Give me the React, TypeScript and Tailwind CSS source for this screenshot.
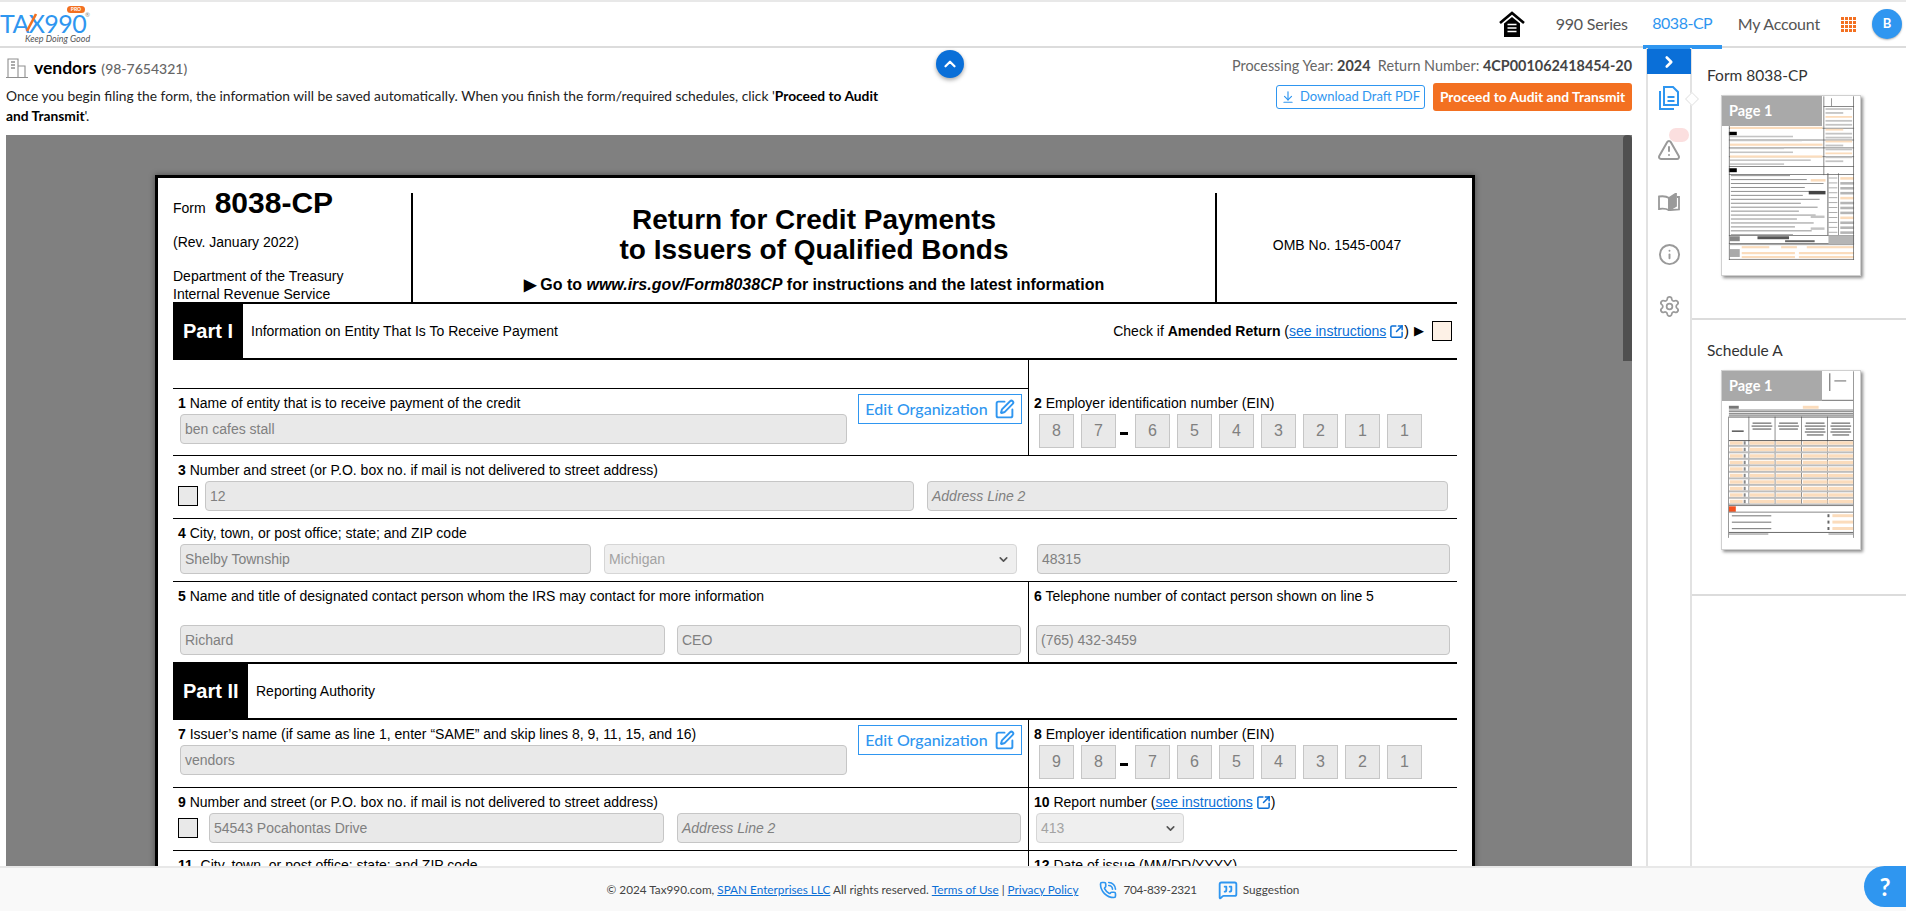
import React from "react";
import {
  ArrowDownToLine,
  ChevronDown,
  ChevronRight,
  ChevronUp,
  Info,
  MessageSquareQuote,
  PhoneCall,
  Settings,
  SquareArrowOutUpRight,
  SquarePen,
  TriangleAlert,
} from "lucide-react";

const fieldClass =
  "h-[30px] rounded-[4px] border-[1.5px] border-[#c6c6c6] bg-[#e9e9e9] px-[4px] text-[14px] leading-[28px] text-[#808080]";

function Field({ value, className = "", italic = false }: { value: string; className?: string; italic?: boolean }) {
  return <div className={`${fieldClass} ${italic ? "italic text-[#8c8c8c]" : ""} ${className}`}>{value}</div>;
}

function SelectField({ value, className = "" }: { value: string; className?: string }) {
  return (
    <div className={`flex h-[30px] items-center justify-between rounded-[4px] border-[1.5px] border-[#d6d6d6] bg-[#efefef] pl-[4px] pr-[6px] text-[14px] text-[#a3a3a3] ${className}`}>
      <span>{value}</span>
      <ChevronDown size={13} strokeWidth={3} className="text-[#555]" />
    </div>
  );
}

function Label({ num, children, className = "" }: { num: string; children: React.ReactNode; className?: string }) {
  return (
    <div className={`h-[25px] whitespace-nowrap pt-[6px] text-[14px] leading-[16px] text-black ${className}`}>
      <b>{num}</b> {children}
    </div>
  );
}

function SeeInstructions() {
  return (
    <a className="inline-flex items-center gap-[3px] text-[#0b6fd6] underline">
      see instructions
      <SquareArrowOutUpRight size={15} strokeWidth={2.4} />
    </a>
  );
}

function EditOrganization() {
  return (
    <button className="mt-[5px] flex h-[30px] w-[164px] items-center justify-center gap-[6px] border border-[#2f96f0] font-['Lato',sans-serif] text-[16px] font-medium text-[#2f96f0]">
      Edit Organization
      <SquarePen size={21} strokeWidth={2.2} />
    </button>
  );
}

function EinBoxes({ digits }: { digits: string[] }) {
  return (
    <div className="ml-[5px] flex gap-[7px]">
      {digits.map((d, i) => (
        <React.Fragment key={i}>
          <div className="flex h-[34px] w-[35px] items-center justify-center border-[1.5px] border-[#c6c6c6] bg-[#e9e9e9] text-[16px] text-[#808080]">
            {d}
          </div>
          {i === 1 && <div className="-ml-[3px] mt-[18px] h-[3px] w-[8px] bg-black" />}
        </React.Fragment>
      ))}
    </div>
  );
}

function PartHeader({ part, title, wide, children }: { part: string; title: string; wide?: boolean; children?: React.ReactNode }) {
  return (
    <div className="flex h-[58px] items-stretch border-y-2 border-black">
      <div className={`-my-[2px] flex items-center bg-black pl-[10px] text-[20px] font-bold text-white ${wide ? "w-[75px]" : "w-[70px]"}`}>
        {part}
      </div>
      <div className="ml-[8px] flex items-center text-[14px] text-black">{title}</div>
      {children}
    </div>
  );
}

function Row({ left, right, height }: { left: React.ReactNode; right: React.ReactNode; height: string }) {
  return (
    <div className={`flex border-b border-black ${height}`}>
      <div className="w-[855px] pl-[5px]">{left}</div>
      <div className="flex-1 border-l border-black pl-[5px]">{right}</div>
    </div>
  );
}

function TaxForm() {
  return (
    <div className="ml-[149px] mt-[40px] w-[1320px] border-[3px] border-black bg-white px-[15px] pb-[40px] pt-[15px] font-['Liberation_Sans',sans-serif] shadow-[0_0_6px_rgba(0,0,0,0.4)]">
      {/* title block */}
      <div className="flex h-[109px] text-black">
        <div className="w-[240px] border-r-2 border-black">
          <div className="-mt-[2px] flex items-baseline gap-[9px] text-[14px]">
            Form <span className="text-[30px] font-bold leading-[24px]">8038-CP</span>
          </div>
          <div className="mt-[14px] text-[14px] leading-[18px]">(Rev. January 2022)</div>
          <div className="mt-[16px] text-[14px] leading-[18px]">
            Department of the Treasury
            <br />
            Internal Revenue Service
          </div>
        </div>
        <div className="flex-1 pt-[12px] text-center font-bold">
          <div className="text-[28px] leading-[30px]">
            Return for Credit Payments
            <br />
            to Issuers of Qualified Bonds
          </div>
          <div className="mt-[10px] text-[16px] leading-[19px]">
            ▶ Go to <i>www.irs.gov/Form8038CP</i> for instructions and the latest information
          </div>
        </div>
        <div className="flex w-[242px] items-center justify-center border-l-2 border-black pb-[4px] text-[14px]">OMB No. 1545-0047</div>
      </div>

      <PartHeader part="Part I" title="Information on Entity That Is To Receive Payment">
        <div className="ml-auto flex items-center pr-[5px] text-[14px] text-black">
          Check if&nbsp;<b>Amended Return</b>&nbsp;(<SeeInstructions />) <span className="ml-[5px] text-[13px]">▶</span>
          <div className="ml-[8px] h-[20px] w-[20px] border border-black bg-[#fdf1e6]" />
        </div>
      </PartHeader>

      <Row
        height="h-[96px]"
        left={
          <div>
            <div className="-ml-[5px] h-[29px] border-b border-black" />
            <div className="flex">
              <div className="w-[669px]">
                <Label num="1">Name of entity that is to receive payment of the credit</Label>
                <Field value="ben cafes stall" className="ml-[2px]" />
              </div>
              <div className="ml-[11px]">
                <EditOrganization />
              </div>
            </div>
          </div>
        }
        right={
          <div className="pt-[29px]">
            <Label num="2">Employer identification number (EIN)</Label>
            <EinBoxes digits={["8", "7", "6", "5", "4", "3", "2", "1", "1"]} />
          </div>
        }
      />

      <div className="h-[63px] border-b border-black pl-[5px]">
        <Label num="3">Number and street (or P.O. box no. if mail is not delivered to street address)</Label>
        <div className="flex items-center">
          <div className="h-[20px] w-[20px] border border-black bg-[#e9e9e9]" />
          <Field value="12" className="ml-[7px] w-[709px]" />
          <Field value="Address Line 2" italic className="ml-[13px] w-[521px]" />
        </div>
      </div>

      <div className="h-[63px] border-b border-black pl-[5px]">
        <Label num="4">City, town, or post office; state; and ZIP code</Label>
        <div className="ml-[2px] flex">
          <Field value="Shelby Township" className="w-[411px]" />
          <SelectField value="Michigan" className="ml-[13px] w-[413px]" />
          <Field value="48315" className="ml-[20px] w-[413px]" />
        </div>
      </div>

      <div className="flex h-[80px]">
        <div className="w-[855px] pl-[5px]">
          <Label num="5" className="h-[43px]">Name and title of designated contact person whom the IRS may contact for more information</Label>
          <div className="ml-[2px] flex">
            <Field value="Richard" className="w-[485px]" />
            <Field value="CEO" className="ml-[12px] w-[344px]" />
          </div>
        </div>
        <div className="flex-1 border-l border-black pl-[5px]">
          <Label num="6" className="h-[43px]">Telephone number of contact person shown on line 5</Label>
          <Field value="(765) 432-3459" className="ml-[2px] w-[414px]" />
        </div>
      </div>

      <PartHeader part="Part II" title="Reporting Authority" wide />

      <Row
        height="h-[68px]"
        left={
          <div className="flex">
            <div className="w-[669px]">
              <Label num="7">Issuer’s name (if same as line 1, enter “SAME” and skip lines 8, 9, 11, 15, and 16)</Label>
              <Field value="vendors" className="ml-[2px]" />
            </div>
            <div className="ml-[11px]">
              <EditOrganization />
            </div>
          </div>
        }
        right={
          <div>
            <Label num="8">Employer identification number (EIN)</Label>
            <EinBoxes digits={["9", "8", "7", "6", "5", "4", "3", "2", "1"]} />
          </div>
        }
      />

      <Row
        height="h-[63px]"
        left={
          <div>
            <Label num="9">Number and street (or P.O. box no. if mail is not delivered to street address)</Label>
            <div className="flex items-center">
              <div className="h-[20px] w-[20px] border border-black bg-[#e9e9e9]" />
              <Field value="54543 Pocahontas Drive" className="ml-[11px] w-[455px]" />
              <Field value="Address Line 2" italic className="ml-[13px] w-[344px]" />
            </div>
          </div>
        }
        right={
          <div>
            <Label num="10">
              Report number (<SeeInstructions />)
            </Label>
            <SelectField value="413" className="ml-[2px] w-[148px]" />
          </div>
        }
      />

      <Row
        height="h-[63px]"
        left={<Label num="11">&nbsp;City, town, or post office; state; and ZIP code</Label>}
        right={<Label num="12">Date of issue (MM/DD/YYYY)</Label>}
      />
    </div>
  );
}

function FormThumb() {
  const peach = "#fbdcbc";
  const grey = "#c4c4c4";
  const dark = "#555";
  const textRows = [80, 84, 88, 92, 96, 100, 104, 108, 112, 116, 120, 124, 128, 132, 136, 140];
  const rightRows = [82, 87, 92, 97, 102, 107, 112, 117, 122, 127, 132, 137];
  const topRows = [12, 16, 20, 24, 28, 33, 37, 41, 45, 49, 53, 57, 61, 65];
  const leftRows = [31, 40, 44, 48, 52, 56, 60, 64, 68];
  return (
    <svg viewBox="0 0 140 181" className="h-full w-full blur-[0.3px]">
      {[[7, 32, 127], [7, 44, 127], [7, 52, 127], [7, 61, 127], [7, 71, 127], [7, 79, 127], [7, 141, 127], [7, 149, 127], [7, 165, 127]].map(([x, y, w], i) => (
        <rect key={i} x={x} y={y} width={w} height={0.7} fill={dark} />
      ))}
      <rect x={7} y={36} width={8} height={3.5} fill="#000" />
      <rect x={7} y={73} width={8} height={4} fill="#000" />
      {leftRows.map((y, i) => (
        <rect key={y} x={8} y={y} width={i % 3 === 0 ? 94 : 55 + (i * 9) % 36} height={i % 3 === 0 ? 2.2 : 1.6} fill={i % 3 === 0 ? peach : grey} />
      ))}
      <rect x={103} y={0} width={0.7} height={80} fill={dark} />
      {topRows.map((y, i) => (
        <rect key={y} x={105} y={y} width={i % 4 === 1 ? 18 : 27} height={1.8} fill={i % 3 === 2 ? peach : grey} />
      ))}
      {textRows.map((y, i) => (
        <rect key={y} x={9} y={y} width={60 + ((i * 17) % 36)} height={1} fill="#8f8f8f" />
      ))}
      <rect x={107} y={78} width={0.9} height={63} fill={dark} />
      <rect x={118} y={78} width={0.6} height={63} fill={dark} />
      {rightRows.map((y, i) => (
        <g key={y}>
          <rect x={120} y={y} width={14} height={2.6} fill={i % 4 === 0 ? peach : "#b5b5b5"} />
          <rect x={108} y={y + 0.5} width={9} height={0.8} fill="#999" />
        </g>
      ))}
      <rect x={90} y={84} width={15} height={2.5} fill={peach} />
      <rect x={88} y={96} width={17} height={3.5} fill="#444" />
      <rect x={90} y={121} width={14} height={2.5} fill={grey} />
      <rect x={90} y={133} width={14} height={2.5} fill={grey} />
      <rect x={108} y={141} width={26} height={9} fill="#b5b5b5" />
      <rect x={36} y={142} width={32} height={3} fill="#555" />
      <rect x={64} y={146} width={30} height={2} fill="#666" />
      <rect x={8} y={142} width={10} height={5} fill="#888" />
      <rect x={8} y={150} width={126} height={1} fill="#999" />
      <rect x={20} y={152} width={28} height={2.2} fill={peach} />
      <rect x={60} y={152} width={16} height={2.2} fill={peach} />
      <rect x={86} y={152} width={48} height={2.2} fill={peach} />
      <rect x={20} y={158} width={54} height={2.2} fill={peach} />
      <rect x={78} y={158} width={56} height={2.2} fill={peach} />
      <rect x={20} y={162} width={54} height={2.2} fill={peach} />
      <rect x={78} y={162} width={56} height={2.2} fill={peach} />
      <rect x={8} y={155} width={10} height={8} fill="#aaa" />
      <rect x={7} y={30} width={0.7} height={136} fill={dark} />
      <rect x={133} y={0} width={0.7} height={166} fill={dark} />
      <rect x={111} y={2} width={0.6} height={8} fill={dark} />
      <rect x={103} y={10} width={31} height={0.7} fill={dark} />
    </svg>
  );
}

function ScheduleThumb() {
  const columns = [[8, 13], [28, 25], [55, 25], [82, 25], [108, 25]];
  const rows = [71, 77.6, 84.2, 90.8, 97.4, 104, 110.6, 117.2, 123.8, 130.4];
  return (
    <svg viewBox="0 0 140 180" className="h-full w-full blur-[0.3px]">
      <rect x={109} y={2} width={0.8} height={18} fill="#333" />
      <rect x={114} y={9} width={12} height={1.5} fill="#999" />
      <rect x={7} y={29} width={126} height={0.7} fill="#333" />
      <rect x={7} y={35} width={10} height={3} fill="#777" />
      <rect x={82} y={35} width={16} height={3} fill="#fbdcbc" />
      <rect x={7} y={39} width={126} height={0.6} fill="#333" />
      {[40.5, 42.5, 44].map((y) => (
        <rect key={y} x={7} y={y} width={126} height={1} fill="#777" />
      ))}
      <rect x={7} y={46} width={126} height={0.8} fill="#333" />
      <rect x={7} y={70} width={126} height={0.8} fill="#333" />
      {[27, 53.5, 80.5, 106.5].map((x) => (
        <rect key={x} x={x} y={46} width={0.6} height={89} fill="#444" />
      ))}
      {columns.slice(1).map(([x, w], i) => (
        <g key={x}>
          <rect x={x + 3} y={52} width={w - 6} height={1.2} fill="#666" />
          <rect x={x + 2} y={55} width={w - 4} height={1.2} fill="#666" />
          <rect x={x + 3} y={58} width={w - 6} height={1.2} fill="#666" />
          {i > 1 && <rect x={x + 2} y={61} width={w - 4} height={1.2} fill="#666" />}
          {i > 1 && <rect x={x + 4} y={64} width={w - 8} height={1.2} fill="#666" />}
        </g>
      ))}
      <rect x={10} y={60} width={12} height={1.5} fill="#555" />
      {rows.map((y) => (
        <g key={y}>
          <rect x={7} y={y + 3.6} width={126} height={2} fill="#bdbdbd" />
          {columns.map(([x, w]) => (
            <rect key={x} x={x} y={y} width={w} height={3.4} fill="#fbdcbc" />
          ))}
          <rect x={22} y={y} width={2} height={3.4} fill="#888" />
        </g>
      ))}
      <rect x={7} y={137} width={7} height={5.5} fill="#f4511e" />
      <rect x={7} y={136} width={126} height={0.7} fill="#555" />
      <rect x={7} y={142.5} width={126} height={0.7} fill="#555" />
      {[146, 152.5, 159].map((y) => (
        <g key={y}>
          <rect x={10} y={y} width={40} height={1.2} fill="#888" />
          <rect x={112} y={y - 1} width={21} height={3} fill="#fbdcbc" />
          <rect x={107} y={y - 1} width={2} height={3} fill="#666" />
        </g>
      ))}
      <rect x={7} y={163} width={126} height={0.8} fill="#444" />
      <rect x={7} y={164.5} width={40} height={1.2} fill="#999" />
      <rect x={108} y={164.5} width={25} height={1.2} fill="#999" />
      <rect x={6.5} y={46} width={0.6} height={123} fill="#555" />
      <rect x={133} y={0} width={0.6} height={169} fill="#555" />
    </svg>
  );
}

function Thumbnail({ children, height }: { children: React.ReactNode; height: string }) {
  return (
    <div className={`relative ml-[14px] w-[140px] border border-[#d0d0d0] bg-white shadow-[2px_2px_3px_rgba(0,0,0,0.45)] ${height}`}>
      {children}
      <div className="absolute left-0 top-0 flex h-[30px] w-[100px] items-center bg-[#a9a9a9] pl-[7px] text-[14.5px] font-bold text-white">Page 1</div>
    </div>
  );
}

function HomeIcon() {
  return (
    <svg viewBox="0 0 26 26" className="h-[26px] w-[26px]">
      <path d="M1 12 L13 2 L25 12" fill="none" stroke="#000" strokeWidth="2.6" />
      <path d="M5 12.5 L13 6 L21 12.5 V26 H5 Z" fill="#000" />
      <path d="M8.5 13.5h9M8.5 17h9M8.5 20.5h9" stroke="#fff" strokeWidth="1.4" />
    </svg>
  );
}

function DocIcon() {
  return (
    <svg viewBox="0 0 20 24" className="h-[24px] w-[20px]" fill="none" stroke="#2f96f0" strokeWidth="2">
      <path d="M5 1h9l5 5v13H5z" />
      <path d="M1 5v18h14" />
      <path d="M8.5 11h7M8.5 15h7" strokeWidth="1.8" />
    </svg>
  );
}

function BookIcon() {
  return (
    <svg viewBox="0 0 22 18" className="h-[18px] w-[22px]" fill="none" stroke="#9a9a9a" strokeWidth="1.8">
      <path d="M11 5C9 3.500 5 3 1 3.500V16c4-.6 8 0 10 1.200z" />
      <path d="M11 5l7-4.500V13l-7 4.200z" fill="#9a9a9a" />
      <path d="M19 4h2v12.500l-10 .700" />
    </svg>
  );
}

function BuildingIcon() {
  return (
    <svg viewBox="0 0 22 20" className="h-[20px] w-[22px]" fill="none" stroke="#8f8f8f" strokeWidth="1.100">
      <path d="M2 19V1h10v18M12 8h7v11M0 19.500h22" />
      <path d="M5 4h4M5 7h4M5 10h4" strokeWidth="1.500" />
    </svg>
  );
}

function Logo() {
  return (
    <div className="relative h-[44px] w-[96px] shrink-0 font-['Lato',sans-serif]">
      <div className="absolute left-0 top-[11px] text-[25px] leading-[20px] tracking-[-0.6px] text-[#2f96f0]">TAX990</div>
      <svg viewBox="0 0 20 20" className="absolute left-[24px] top-[10px] h-[20px] w-[20px]">
        <path d="M3 19 L12 2" stroke="#f37021" strokeWidth="2.6" fill="none" />
      </svg>
      <div className="absolute left-[67px] top-[4px] flex h-[7px] w-[18px] items-center justify-center rounded-full bg-[#f37021] text-[5px] font-bold text-white">PRO</div>
      <div className="absolute left-[85px] top-[9px] text-[6px] leading-[8px] text-[#888]">®</div>
      <div className="absolute left-[25px] top-[32px] whitespace-nowrap text-[9px] italic leading-[9px] text-[#555]">Keep Doing Good</div>
    </div>
  );
}

export default function App() {
  return (
    <div className="relative flex h-screen w-full flex-col overflow-hidden bg-white font-['Lato',sans-serif] text-[#333]">
      <header className="flex h-[48px] shrink-0 items-start border-b-2 border-t-2 border-b-[#dcdcdc] border-t-[#e8e8e8]">
        <Logo />
        <nav className="ml-auto flex h-full items-center text-[16px] text-[#555]">
          <HomeIcon />
          <a className="ml-[31px] tracking-[-0.2px]">990 Series</a>
          <a className="relative ml-[15px] flex h-[47px] w-[79px] items-center justify-center self-start border-b-4 border-[#2f96f0] pb-[1px] tracking-[-0.5px] text-[#2f96f0]">8038-CP</a>
          <a className="ml-[16px] tracking-[-0.2px]">My Account</a>
          <div className="ml-[21px] grid grid-cols-4 gap-[1px]">
            {Array.from({ length: 16 }).map((_, i) => (
              <span key={i} className="h-[3px] w-[3px] bg-[#f37021]" />
            ))}
          </div>
          <div className="ml-[16px] mr-[4px] flex h-[30px] w-[30px] items-center justify-center rounded-full bg-[#2f96f0] text-[13px] font-bold text-white shadow-[0_1px_2px_rgba(0,0,0,0.3)]">B</div>
        </nav>
      </header>

      <div className="flex min-h-0 flex-1">
        <main className="relative flex w-[1646px] shrink-0 flex-col pr-[14px]">
          <div className="flex h-[87px] shrink-0 justify-between pl-[6px]">
            <div className="w-[880px] pt-[9px]">
              <div className="flex h-[22px] items-center">
                <BuildingIcon />
                <span className="ml-[6px] text-[17.5px] font-bold text-black">vendors</span>
                <span className="ml-[5px] text-[14px] font-medium text-[#666]">(98-7654321)</span>
              </div>
              <p className="mt-[7px] text-[13.8px] leading-[20px] text-[#222]">
                Once you begin filing the form, the information will be saved automatically. When you finish the form/required schedules, click '<b className="text-black">Proceed to Audit and Transmit</b>'.
              </p>
            </div>
            <div className="flex flex-col items-end pt-[10px]">
              <div className="h-[16px] text-[14.4px] leading-[16px] text-[#666]">
                Processing Year: <b className="text-[#444]">2024</b>&nbsp;&nbsp;Return Number: <b className="text-[#444]">4CP001062418454-20</b>
              </div>
              <div className="mt-[9px] flex items-center gap-[8px]">
                <button className="flex h-[24px] w-[149px] items-center justify-center gap-[5px] rounded-[3px] border border-[#2f96f0] text-[13px] text-[#2f96f0]">
                  <ArrowDownToLine size={14} />
                  Download Draft PDF
                </button>
                <button className="h-[28px] w-[199px] rounded-[3px] bg-[#f37021] text-[13.8px] font-bold text-white">Proceed to Audit and Transmit</button>
              </div>
            </div>
          </div>
          <button className="absolute left-[936px] top-[2px] flex h-[28px] w-[28px] items-center justify-center rounded-full bg-[#0a6fd8] text-white shadow-[0_2px_4px_rgba(0,0,0,0.35)]">
            <ChevronUp size={18} strokeWidth={3} />
          </button>
          <div className="relative ml-[6px] min-h-0 flex-1 overflow-hidden bg-[#808080]">
            <TaxForm />
            <div className="absolute right-0 top-0 h-[226px] w-[9px] rounded-t-[4px] bg-[#505050]" />
          </div>
        </main>

        <aside className="relative w-[46px] shrink-0 border-x-2 border-[#e2e2e2]">
          <div className="-mx-[1px] mt-[1px] flex h-[25px] items-center justify-center bg-[#0a6fd8] text-white">
            <ChevronRight size={18} strokeWidth={3.5} />
          </div>
          <div className="-mt-[2px] flex flex-col items-center">
            <div className="flex h-[52px] items-center"><DocIcon /></div>
            <div className="flex h-[52px] items-center"><TriangleAlert size={24} strokeWidth={2} className="text-[#9a9a9a]" /></div>
            <div className="flex h-[52px] items-center"><BookIcon /></div>
            <div className="flex h-[52px] items-center"><Info size={23} strokeWidth={2} className="text-[#9a9a9a]" /></div>
            <div className="flex h-[52px] items-center"><Settings size={23} strokeWidth={1.800} className="text-[#9a9a9a]" /></div>
          </div>
          <div className="absolute left-[21px] top-[80px] h-[14px] w-[20px] rounded-full bg-[#fbdfdf]" />
          <div className="absolute -right-[7px] top-[46px] z-10 h-[10px] w-[10px] rotate-45 border border-[#e6e6e6] bg-white" />
        </aside>

        <section className="flex-1">
          <div className="h-[272px] border-b-2 border-[#dcdcdc] pl-[15px] pt-[18px]">
            <h3 className="h-[29px] text-[15.500px] leading-[18px] text-[#333]">Form 8038-CP</h3>
            <Thumbnail height="h-[181px]"><FormThumb /></Thumbnail>
          </div>
          <div className="h-[276px] border-b-2 border-[#dcdcdc] pl-[15px] pt-[21px]">
            <h3 className="h-[29px] text-[15.500px] leading-[18px] text-[#333]">Schedule A</h3>
            <Thumbnail height="h-[180px]"><ScheduleThumb /></Thumbnail>
          </div>
        </section>
      </div>

      <footer className="flex h-[45px] shrink-0 items-center justify-center border-t-2 border-[#e8e8e8] bg-[#f9f9f9] text-[11.75px] text-[#444]">
        <span>© 2024 Tax990.com,&nbsp;</span>
        <a className="text-[#0b6fd6] underline">SPAN Enterprises LLC</a>
        <span>&nbsp;All rights reserved.&nbsp;</span>
        <a className="text-[#0b6fd6] underline">Terms of Use</a>
        <span>&nbsp;|&nbsp;</span>
        <a className="text-[#0b6fd6] underline">Privacy Policy</a>
        <PhoneCall size={18} strokeWidth={2.2} className="ml-[21px] text-[#2f96f0]" />
        <span className="ml-[6px] tracking-[-0.3px]">704-839-2321</span>
        <MessageSquareQuote size={20} strokeWidth={2.2} className="ml-[21px] text-[#2f96f0]" />
        <span className="ml-[5px]">Suggestion</span>
      </footer>

      <button className="absolute bottom-[4px] right-0 flex h-[41px] w-[42px] items-center justify-center rounded-l-full bg-[#2f96f0] text-[24px] font-bold text-white">?</button>
    </div>
  );
}
